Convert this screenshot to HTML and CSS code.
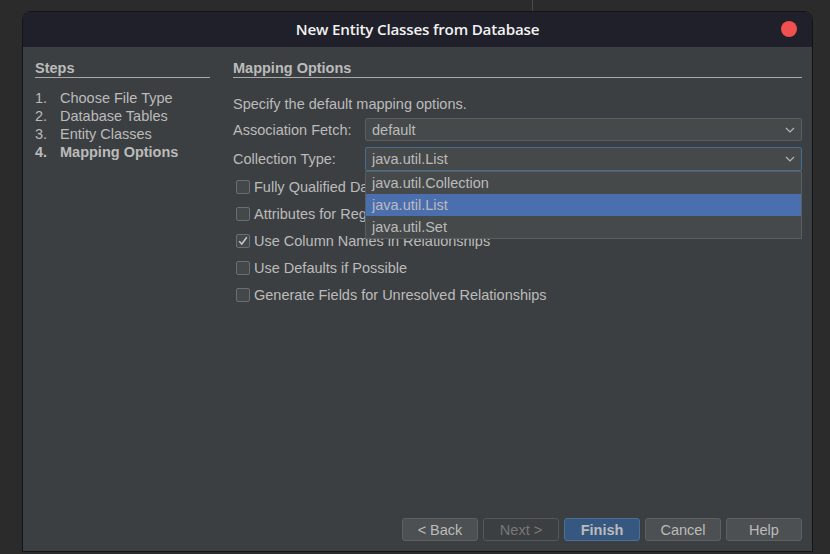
FILE: index.html
```html
<!DOCTYPE html>
<html>
<head>
<meta charset="utf-8">
<link rel="stylesheet" href="styles.css">
</head>
<body>
<div class="desk-line"></div>
<div class="window">
  <div class="titlebar">
    <span class="title">New Entity Classes from Database</span>
    <span class="close"></span>
  </div>
  <div class="content">
    <div class="main">
      <div class="steps">
        <div class="heading">Steps</div>
        <ol class="step-list">
          <li><span class="num">1.</span>Choose File Type</li>
          <li><span class="num">2.</span>Database Tables</li>
          <li><span class="num">3.</span>Entity Classes</li>
          <li class="current"><span class="num">4.</span>Mapping Options</li>
        </ol>
      </div>
      <div class="panel">
        <div class="heading">Mapping Options</div>
        <p class="intro">Specify the default mapping options.</p>
        <div class="field">
          <span class="label">Association Fetch:</span>
          <div class="combo">
            <span>default</span>
            <svg class="chev" width="10" height="6" viewBox="0 0 10 6"><path d="M1 1 L5 5 L9 1" fill="none" stroke="#b5b5b5" stroke-width="1.2"/></svg>
          </div>
        </div>
        <div class="field">
          <span class="label">Collection Type:</span>
          <div class="combo focused">
            <span>java.util.List</span>
            <svg class="chev" width="10" height="6" viewBox="0 0 10 6"><path d="M1 1 L5 5 L9 1" fill="none" stroke="#b5b5b5" stroke-width="1.2"/></svg>
            <ul class="popup">
              <li>java.util.Collection</li>
              <li class="sel">java.util.List</li>
              <li>java.util.Set</li>
            </ul>
          </div>
        </div>
        <div class="checks">
          <label class="check"><span class="box"></span>Fully Qualified Database Table Names</label>
          <label class="check"><span class="box"></span>Attributes for Regenerating Tables</label>
          <label class="check"><span class="box checked"><svg width="12" height="12" viewBox="0 0 12 12"><path d="M2.2 6.2 L4.8 9 L9.8 2.2" fill="none" stroke="#c8c8c8" stroke-width="1.5"/></svg></span>Use Column Names in Relationships</label>
          <label class="check"><span class="box"></span>Use Defaults if Possible</label>
          <label class="check"><span class="box"></span>Generate Fields for Unresolved Relationships</label>
        </div>
      </div>
    </div>
    <div class="buttons">
      <button class="btn">&lt; Back</button>
      <button class="btn disabled">Next &gt;</button>
      <button class="btn primary">Finish</button>
      <button class="btn">Cancel</button>
      <button class="btn">Help</button>
    </div>
  </div>
</div>
</body>
</html>
```
FILE: styles.css
```css
* { box-sizing: border-box; }
html, body {
  margin: 0;
  padding: 0;
  width: 830px;
  height: 554px;
  overflow: hidden;
  background: #2b2b2b;
  font-family: "Liberation Sans", Arial, sans-serif;
  font-size: 14.5px;
  color: #bbbbbb;
}
.desk-line {
  position: absolute;
  left: 532px;
  top: 0;
  width: 1px;
  height: 11px;
  background: #4a4a4a;
}
.window {
  margin: 11px 0 0 22px;
  width: 791px;
  height: 541px;
  border: 1px solid #141414;
  border-radius: 9px 9px 0 0;
  overflow: hidden;
  display: flex;
  flex-direction: column;
  background: #3c3f41;
}
.titlebar {
  height: 35px;
  flex: none;
  background: #1f2029;
  display: flex;
  align-items: center;
  justify-content: center;
  padding-bottom: 2px;
  position: relative;
}
.title {
  font-family: "Open Sans", "DejaVu Sans", sans-serif;
  font-weight: 600;
  font-size: 15.2px;
  color: #f2f2f2;
  letter-spacing: -0.2px;
}
.close {
  position: absolute;
  right: 15px;
  top: 9px;
  width: 16px;
  height: 16px;
  border-radius: 50%;
  background: #f0504f;
}
.content {
  flex: 1;
  display: flex;
  flex-direction: column;
  padding: 13px 10px 10px 12px;
}
.main {
  flex: 1;
  display: flex;
  gap: 23px;
}
.steps { width: 175px; flex: none; }
.panel { flex: 1; }
.heading {
  font-weight: bold;
  line-height: 17px;
  border-bottom: 1px solid #a9a9a9;
}
.step-list {
  list-style: none;
  margin: 11px 0 0 0;
  padding: 0;
}
.step-list li {
  line-height: 18px;
  display: flex;
}
.step-list .num { width: 25px; flex: none; }
.step-list .current { font-weight: bold; }
.intro {
  margin: 17px 0 5px 0;
  line-height: 18px;
}
.field {
  display: flex;
  align-items: center;
}
.field + .field { margin-top: 6px; }
.label { width: 132px; flex: none; }
.combo {
  flex: 1;
  height: 23px;
  border: 1px solid #5b5e61;
  border-radius: 2px;
  background: #45494a;
  display: flex;
  align-items: center;
  justify-content: space-between;
  padding: 0 6px 0 6px;
  position: relative;
}
.combo.focused { border-color: #466d94; height: 24px; }
.popup {
  position: absolute;
  left: -1px;
  right: -1px;
  top: 23px;
  margin: 0;
  padding: 0;
  list-style: none;
  background: #45494a;
  border: 1px solid #5b5e61;
  z-index: 2;
}
.popup li {
  height: 22px;
  line-height: 22px;
  padding-left: 6px;
}
.popup li.sel { background: #4b6eaf; }
.checks {
  margin-top: 2px;
  display: flex;
  flex-direction: column;
}
.check {
  height: 27px;
  display: flex;
  align-items: center;
  padding-left: 3px;
}
.box {
  width: 14px;
  height: 14px;
  border: 1px solid #6b6e70;
  border-radius: 2px;
  background: #43494a;
  margin-right: 4px;
  display: flex;
  align-items: center;
  justify-content: center;
}
.buttons {
  display: flex;
  justify-content: flex-end;
  gap: 5px;
}
.btn {
  width: 76px;
  height: 23px;
  font-family: "Liberation Sans", Arial, sans-serif;
  font-size: 14.5px;
  color: #bbbbbb;
  background: #4c5052;
  border: 1px solid #5e6163;
  border-radius: 3px;
  padding: 0;
}
.btn.disabled {
  background: #3c3f41;
  color: #777777;
  border-color: #55585a;
}
.btn.primary {
  background: #365880;
  border-color: #4c6f95;
  font-weight: bold;
}
```
